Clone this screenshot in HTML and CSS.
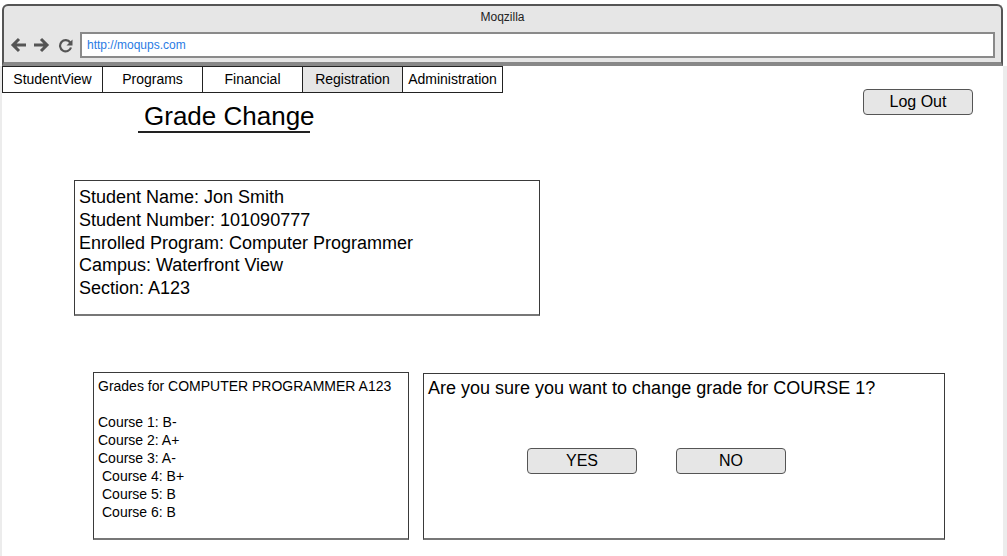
FILE: index.html
```html
<!DOCTYPE html>
<html>
<head>
    <link rel="stylesheet" href="styles.css">
</head>
<body>
<div class="window">
    <div class="windowTitle">Moqzilla</div>
    <div class="toolbar">
        <svg class="navIcon" width="17" height="16" viewBox="0 0 17 16">
            <path d="M16 8H3 M9 2L3 8L9 14" fill="none" stroke="#555" stroke-width="3"/>
        </svg>
        <svg class="navIcon" width="17" height="16" viewBox="0 0 17 16">
            <path d="M1 8H14 M8 2L14 8L8 14" fill="none" stroke="#555" stroke-width="3"/>
        </svg>
        <svg class="navIcon reload" width="15" height="15" viewBox="0 0 15 15">
            <path d="M12.2 4.5A5.6 5.6 0 1 0 13 9.5" fill="none" stroke="#555" stroke-width="2.2"/>
            <path d="M14.5 1.5V7.5H8.5Z" fill="#555"/>
        </svg>
        <div class="address">http://moqups.com</div>
    </div>
</div>
<div class="page">
    <div class="tabs">
        <div class="tab first">StudentView</div>
        <div class="tab">Programs</div>
        <div class="tab">Financial</div>
        <div class="tab active">Registration</div>
        <div class="tab">Administration</div>
    </div>
    <div class="headerRow">
        <div class="pageTitle">Grade Change</div>
        <div class="button logout">Log Out</div>
    </div>
    <div class="studentBox">
        <div>Student Name: Jon Smith</div>
        <div>Student Number: 101090777</div>
        <div>Enrolled Program: Computer Programmer</div>
        <div>Campus: Waterfront View</div>
        <div>Section: A123</div>
    </div>
    <div class="lowerRow">
        <div class="gradesBox">
            <div>Grades for COMPUTER PROGRAMMER A123</div>
            <div>&nbsp;</div>
            <div>Course 1: B-</div>
            <div>Course 2: A+</div>
            <div>Course 3: A-</div>
            <div class="indent">Course 4: B+</div>
            <div class="indent">Course 5: B</div>
            <div class="indent">Course 6: B</div>
        </div>
        <div class="confirmBox">
            <div class="question">Are you sure you want to change grade for COURSE 1?</div>
            <div class="choices">
                <div class="button">YES</div>
                <div class="button">NO</div>
            </div>
        </div>
    </div>
</div>
</body>
</html>
```

FILE: styles.css
```css
body {
    margin: 0;
    background-color: white;
    color: black;
    font-family: "Liberation Sans", Arial, sans-serif;
    height: 556px;
    overflow: hidden;
}
.window {
    margin: 4px 4px 0 2px;
    background-color: #e6e6e6;
    border: 2px solid #555;
    border-bottom: 4px solid #888;
    border-radius: 6px 6px 0 0;
}
.windowTitle {
    height: 24px;
    line-height: 22px;
    text-align: center;
    font-size: 12px;
    color: #222;
}
.toolbar {
    display: flex;
    align-items: center;
    padding: 2px 6px 4px 6px;
}
.navIcon {
    margin-right: 6px;
}
.reload {
    margin-left: 2px;
    margin-right: 7px;
}
.address {
    flex: 1;
    height: 22px;
    line-height: 22px;
    background-color: white;
    border: 2px solid #8a8a8a;
    padding-left: 5px;
    font-size: 12px;
    color: #2a7be4;
}
.page {
    height: 490px;
    border-left: 2px solid #ececec;
    border-right: 4px solid #ececec;
}
.tabs {
    display: flex;
}
.tab {
    box-sizing: border-box;
    width: 100px;
    height: 27px;
    line-height: 25px;
    border: 1px solid #222;
    border-left: none;
    text-align: center;
    font-size: 14px;
}
.tab.first {
    width: 101px;
    border-left: 1px solid #222;
}
.tab.active {
    background-color: #e6e6e6;
}
.headerRow {
    display: flex;
    justify-content: space-between;
}
.pageTitle {
    width: 166px;
    margin: 9px 0 0 136px;
    padding-left: 6px;
    height: 29px;
    line-height: 29px;
    font-size: 26px;
    white-space: nowrap;
    border-bottom: 2px solid #222;
}
.button {
    width: 108px;
    height: 24px;
    line-height: 24px;
    text-align: center;
    font-size: 16px;
    background-color: #e6e6e6;
    border: 1px solid #555;
    border-radius: 4px;
}
.logout {
    margin: -4px 30px 0 0;
}
.studentBox {
    width: 456px;
    height: 125px;
    margin: 47px 0 0 72px;
    padding: 5px 4px 3px 4px;
    border: 1px solid #3a3a3a;
    border-bottom: 2px solid #777;
    font-size: 18px;
    line-height: 22.75px;
}
.lowerRow {
    display: flex;
    align-items: flex-start;
    margin: 56px 0 0 91px;
}
.gradesBox {
    width: 306px;
    height: 161px;
    padding: 4px 4px 0 4px;
    border: 1px solid #3a3a3a;
    border-bottom: 2px solid #777;
    font-size: 14px;
    line-height: 18px;
}
.indent {
    padding-left: 4px;
}
.confirmBox {
    width: 516px;
    height: 161px;
    margin: 1px 0 0 14px;
    padding: 3px 0 0 4px;
    border: 1px solid #3a3a3a;
    border-bottom: 2px solid #777;
}
.question {
    font-size: 18px;
    line-height: 22px;
}
.choices {
    display: flex;
    gap: 39px;
    margin: 49px 0 0 99px;
}
```
